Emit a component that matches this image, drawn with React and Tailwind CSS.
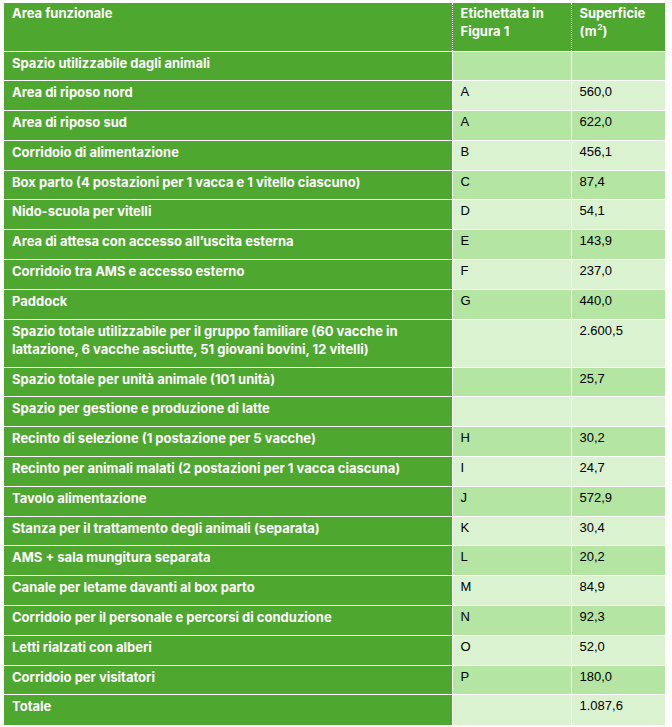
const rows = [
  ["Spazio utilizzabile dagli animali", "", ""],
  ["Area di riposo nord", "A", "560,0"],
  ["Area di riposo sud", "A", "622,0"],
  ["Corridoio di alimentazione", "B", "456,1"],
  ["Box parto (4 postazioni per 1 vacca e 1 vitello ciascuno)", "C", "87,4"],
  ["Nido-scuola per vitelli", "D", "54,1"],
  ["Area di attesa con accesso all’uscita esterna", "E", "143,9"],
  ["Corridoio tra AMS e accesso esterno", "F", "237,0"],
  ["Paddock", "G", "440,0"],
  ["Spazio totale utilizzabile per il gruppo familiare (60 vacche in lattazione, 6 vacche asciutte, 51 giovani bovini, 12 vitelli)", "", "2.600,5"],
  ["Spazio totale per unità animale (101 unità)", "", "25,7"],
  ["Spazio per gestione e produzione di latte", "", ""],
  ["Recinto di selezione (1 postazione per 5 vacche)", "H", "30,2"],
  ["Recinto per animali malati (2 postazioni per 1 vacca ciascuna)", "I", "24,7"],
  ["Tavolo alimentazione", "J", "572,9"],
  ["Stanza per il trattamento degli animali (separata)", "K", "30,4"],
  ["AMS + sala mungitura separata", "L", "20,2"],
  ["Canale per letame davanti al box parto", "M", "84,9"],
  ["Corridoio per il personale e percorsi di conduzione", "N", "92,3"],
  ["Letti rialzati con alberi", "O", "52,0"],
  ["Corridoio per visitatori", "P", "180,0"],
  ["Totale", "", "1.087,6"],
];

export default function App() {
  return (
    <div className="bg-white w-[672px] h-[727px] pt-[3px] pl-[4px]">
      <table className="table-fixed border-collapse w-[661px] text-[13px] leading-[18px]">
        <colgroup>
          <col className="w-[448px]" />
          <col className="w-[119px]" />
          <col className="w-[94px]" />
        </colgroup>
        <thead>
          <tr className="h-[48px] bg-[#4ea72e] text-white align-top [font-family:Inter,sans-serif]">
            <th className="text-left font-bold px-2 pt-[1px]">Area funzionale</th>
            <th className="text-left font-bold px-2 pt-[1px] border-l border-dotted border-white">
              Etichettata in Figura 1
            </th>
            <th className="text-left font-bold px-2 pt-[1px] border-l border-dotted border-white">
              Superficie (m<span className="inline-block align-top text-[8px] leading-[10px] ml-px">2</span>)
            </th>
          </tr>
        </thead>
        <tbody>
          {rows.map(([name, label, area], i) => {
            const shade = i % 2 === 0 ? "bg-[#b4e5a2]" : "bg-[#daf2d0]";
            const tall = name.length > 80;
            return (
              <tr key={i} className={`align-top ${tall ? "h-[48px]" : "h-[29.8px]"}`}>
                <td className="bg-[#4ea72e] text-white font-bold px-2 pt-[2px] border-t border-white [font-family:Inter,sans-serif]">
                  {name}
                </td>
                <td className={`${shade} text-black px-2 pt-[2px] border-t border-l border-white [font-family:'Liberation_Sans',Arial,sans-serif]`}>
                  {label}
                </td>
                <td className={`${shade} text-black px-2 pt-[2px] border-t border-l border-white [font-family:'Liberation_Sans',Arial,sans-serif]`}>
                  {area}
                </td>
              </tr>
            );
          })}
        </tbody>
      </table>
    </div>
  );
}
